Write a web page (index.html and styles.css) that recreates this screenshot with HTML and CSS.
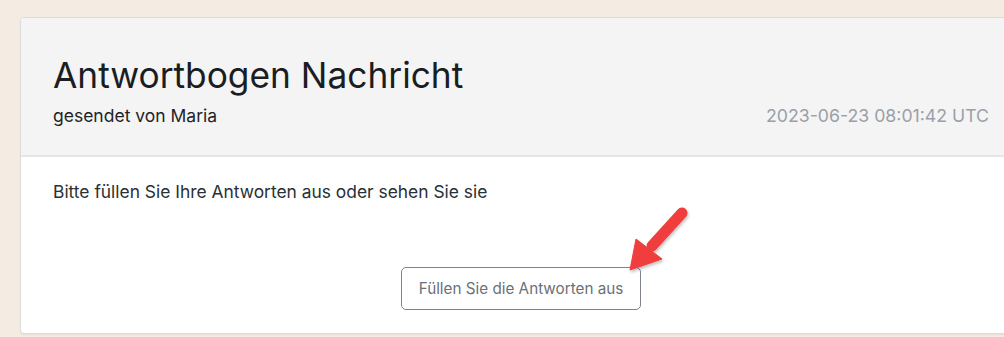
FILE: index.html
```html
<!DOCTYPE html>
<html lang="de">
<head>
<meta charset="utf-8">
<link rel="stylesheet" href="styles.css">
</head>
<body>
<div class="page">
  <div class="card">
    <div class="card-header">
      <h1 class="title">Antwortbogen Nachricht</h1>
      <div class="meta">
        <span class="sender">gesendet von Maria</span>
        <span class="date">2023-06-23 08:01:42 UTC</span>
      </div>
    </div>
    <div class="card-body">
      <p class="intro">Bitte füllen Sie Ihre Antworten aus oder sehen Sie sie</p>
      <div class="actions">
        <button class="btn">Füllen Sie die Antworten aus</button>
      </div>
    </div>
  </div>
  <svg class="arrow" width="80" height="80" viewBox="0 0 80 80">
    <defs>
      <filter id="sh" x="-30%" y="-30%" width="160%" height="160%">
        <feDropShadow dx="1" dy="2" stdDeviation="1.5" flood-color="#000" flood-opacity="0.25"/>
      </filter>
    </defs>
    <g filter="url(#sh)" fill="#f03e3e" stroke="#f03e3e">
      <line x1="62" y1="7" x2="32" y2="40" stroke-width="11" stroke-linecap="round"/>
      <polygon points="10,64 16,33 42,53" stroke-width="1" stroke-linejoin="round"/>
    </g>
  </svg>
</div>
</body>
</html>
```

FILE: styles.css
```css
html, body {
  margin: 0;
  padding: 0;
}
body {
  background: #f4ece2;
  font-family: Inter, "Noto Sans", sans-serif;
  overflow: hidden;
  width: 1004px;
  height: 337px;
}
.page {
  position: relative;
  padding: 17px 0 0 20px;
}
.card {
  width: 1000px;
  background: #fff;
  border: 1px solid #dcdcdc;
  border-radius: 4px;
  box-shadow: 0 1px 2px rgba(0,0,0,0.06);
  overflow: hidden;
}
.card-header {
  background: #f4f4f4;
  border-bottom: 2px solid #e6e6e6;
  padding: 38px 32px 28px 32px;
}
.title {
  margin: 0;
  font-size: 35.3px;
  font-weight: 400;
  color: #1a1d21;
  line-height: 40px;
}
.meta {
  display: flex;
  justify-content: space-between;
  align-items: baseline;
  margin-top: 9px;
}
.sender {
  font-size: 17.5px;
  color: #1f2328;
  line-height: 22px;
}
.date {
  font-size: 17.7px;
  color: #9aa0a8;
  line-height: 22px;
}
.card-body {
  padding: 24px 32px 23px 32px;
}
.intro {
  margin: 0;
  font-size: 17.4px;
  color: #2b2f36;
  line-height: 22px;
}
.actions {
  display: flex;
  justify-content: center;
  margin-top: 64px;
}
.btn {
  font-family: Inter, "Noto Sans", sans-serif;
  font-size: 15.25px;
  color: #6b7079;
  background: #fff;
  border: 1px solid #7d828b;
  border-radius: 5px;
  padding: 0 17px;
  height: 43px;
  cursor: pointer;
}
.arrow {
  position: absolute;
  left: 620px;
  top: 206px;
}
```
